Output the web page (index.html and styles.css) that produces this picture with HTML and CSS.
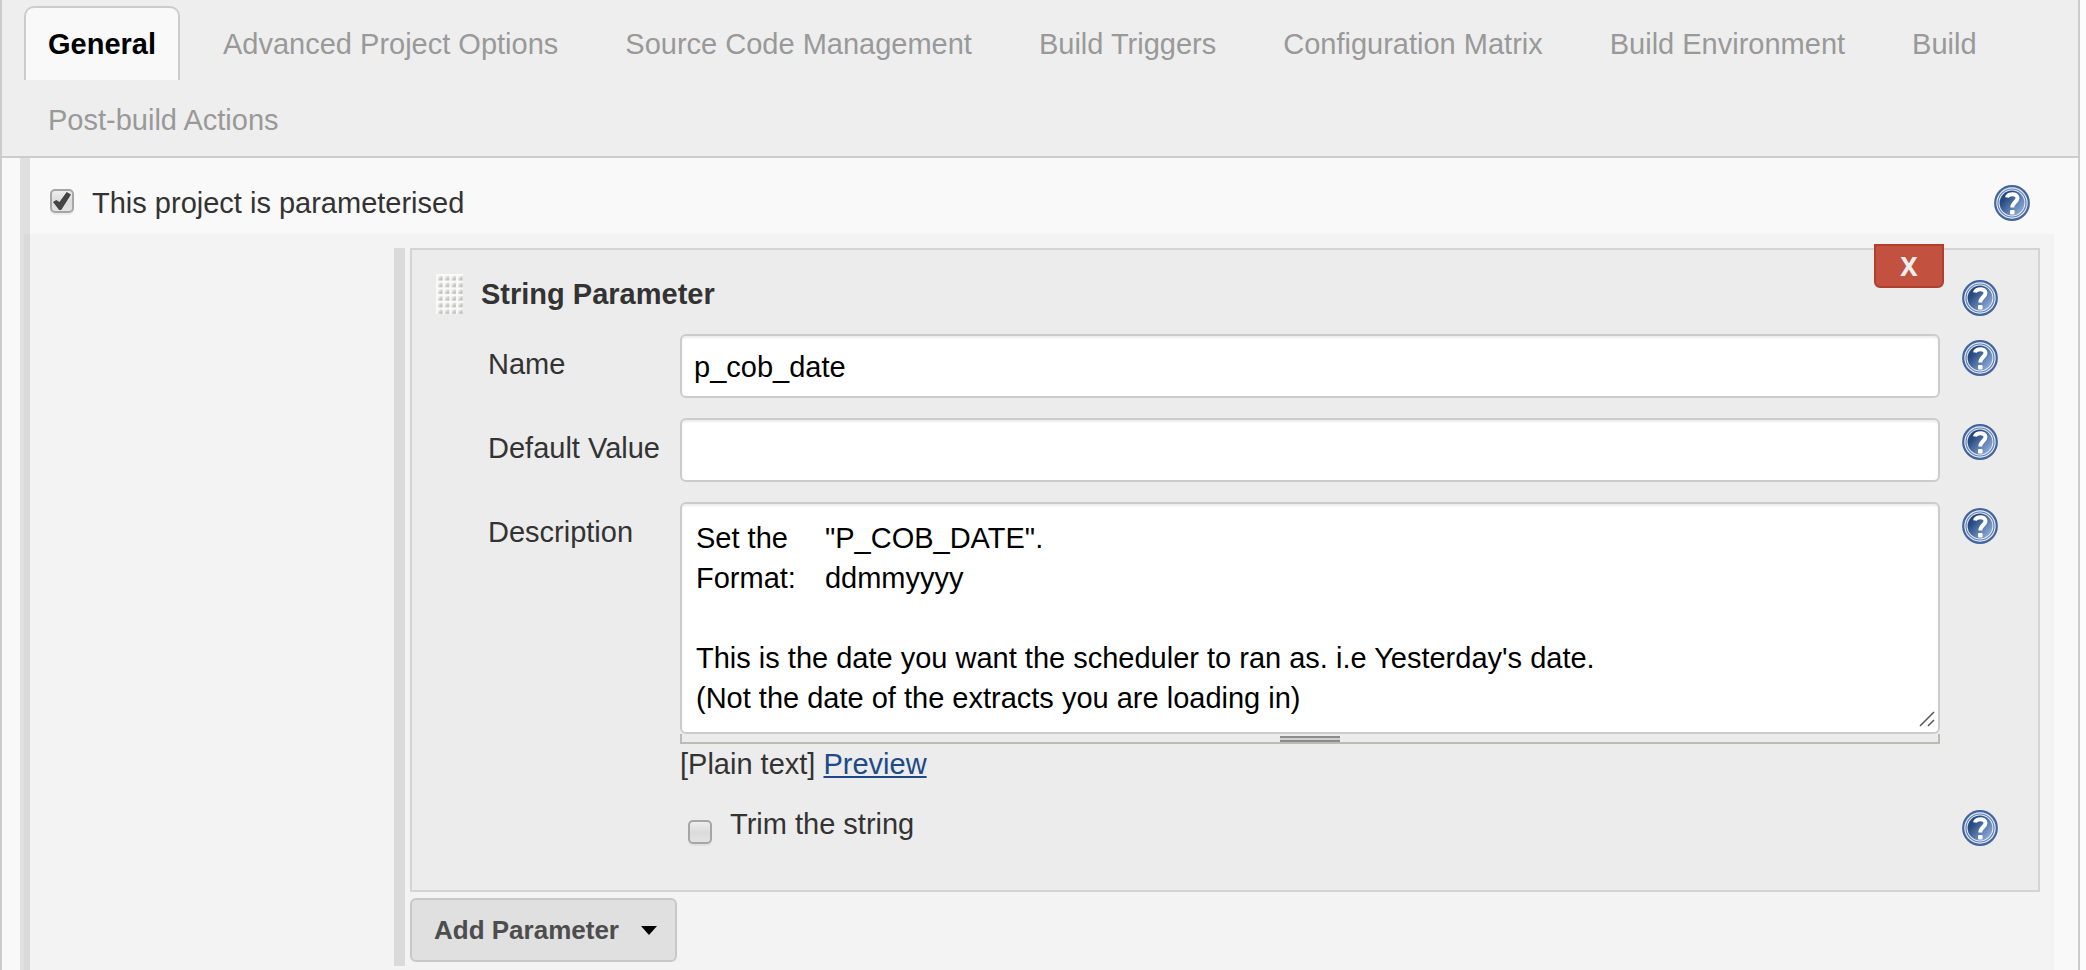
FILE: index.html
```html
<!DOCTYPE html>
<html lang="en">
<head>
<meta charset="utf-8">
<title>Project configuration</title>
<link rel="stylesheet" href="styles.css">
</head>
<body>
<svg class="defs" width="0" height="0" aria-hidden="true">
  <defs>
    <linearGradient id="disc" x1="0.1" y1="0.2" x2="0.9" y2="0.9">
      <stop offset="0.15" stop-color="#27497f"/>
      <stop offset="1" stop-color="#8fb0dc"/>
    </linearGradient>
    <linearGradient id="dot" x1="0" y1="0" x2="1" y2="1">
      <stop offset="0.2" stop-color="#f0f0ee"/>
      <stop offset="1" stop-color="#a3a29d"/>
    </linearGradient>
    <symbol id="help" viewBox="0 0 36 36">
      <circle cx="18" cy="18" r="16.8" fill="#e9eff8" stroke="#4466a0" stroke-width="2.2"/>
      <circle cx="18" cy="18" r="14" fill="#e4ebf6" stroke="#6482b4" stroke-width="1.2"/>
      <circle cx="18" cy="18" r="12.4" fill="url(#disc)"/>
      <path d="M13 12.5C13.5 8.2 23.5 7.7 23.5 13C23.5 17 18.3 17 18.3 22.5" fill="none" stroke="#fff" stroke-width="4"/>
      <rect x="16" y="25" width="4.6" height="4.6" rx="1" fill="#fff"/>
    </symbol>
    <pattern id="dots" width="6.7" height="6.7" patternUnits="userSpaceOnUse">
      <rect width="6.7" height="6.7" fill="#fafafa"/>
      <rect x="2" y="2" width="4.4" height="4.4" fill="url(#dot)"/>
    </pattern>
  </defs>
</svg>
<main class="frame">
  <nav class="tabs">
    <a class="tab tab-active" href="#general">General</a>
    <a class="tab" href="#advanced">Advanced Project Options</a>
    <a class="tab" href="#scm">Source Code Management</a>
    <a class="tab" href="#triggers">Build Triggers</a>
    <a class="tab" href="#matrix">Configuration Matrix</a>
    <a class="tab" href="#environment">Build Environment</a>
    <a class="tab" href="#build">Build</a>
    <a class="tab" href="#post-build">Post-build Actions</a>
  </nav>
  <form class="section" id="general">
    <div class="toggle-row">
      <input class="check" type="checkbox" id="parameterised" checked>
      <label class="toggle-label" for="parameterised">This project is parameterised</label>
      <button class="help" type="button" aria-label="Help"><svg class="help-icon"><use href="#help"/></svg></button>
    </div>
    <div class="nested">
      <div class="params">
        <fieldset class="param">
          <button class="delete" type="button">X</button>
          <div class="param-head">
            <svg class="grip" aria-hidden="true"><rect width="27" height="40" fill="url(#dots)"/></svg>
            <h2 class="param-title">String Parameter</h2>
            <button class="help" type="button" aria-label="Help"><svg class="help-icon"><use href="#help"/></svg></button>
          </div>
          <div class="field">
            <label class="field-label" for="name">Name</label>
            <input class="text" type="text" id="name" value="p_cob_date">
            <button class="help" type="button" aria-label="Help"><svg class="help-icon"><use href="#help"/></svg></button>
          </div>
          <div class="field">
            <label class="field-label" for="default">Default Value</label>
            <input class="text" type="text" id="default">
            <button class="help" type="button" aria-label="Help"><svg class="help-icon"><use href="#help"/></svg></button>
          </div>
          <div class="field">
            <label class="field-label" for="description">Description</label>
            <div class="editor">
              <textarea class="text area" id="description" rows="4">Set the	"P_COB_DATE".
Format:	ddmmyyyy

This is the date you want the scheduler to ran as. i.e Yesterday's date.
(Not the date of the extracts you are loading in)</textarea>
              <svg class="corner" viewBox="0 0 16 16" aria-hidden="true"><path d="M1 15L15 1M9 15L15 9" stroke="#555" stroke-width="1.5"/></svg>
              <div class="drag"><span class="drag-bar"></span></div>
              <div class="format">[Plain text] <a class="preview" href="#preview">Preview</a></div>
            </div>
            <button class="help" type="button" aria-label="Help"><svg class="help-icon"><use href="#help"/></svg></button>
          </div>
          <div class="field">
            <div class="trim">
              <input class="check" type="checkbox" id="trim">
              <label class="trim-label" for="trim">Trim the string</label>
            </div>
            <button class="help" type="button" aria-label="Help"><svg class="help-icon"><use href="#help"/></svg></button>
          </div>
        </fieldset>
        <button class="add" type="button">Add Parameter
          <svg class="caret" viewBox="0 0 16 9" aria-hidden="true"><path d="M0 0H16L8 9Z"/></svg>
        </button>
      </div>
    </div>
  </form>
</main>
</body>
</html>
```
FILE: styles.css
```css
* { box-sizing: border-box; }

body {
  margin: 0;
  padding-right: 6px;
  background: #fcfcfc;
  color: #333;
  font: 29px/40px "Liberation Sans", Arial, Helvetica, sans-serif;
}

.defs { position: absolute; }

.frame {
  display: flex;
  flex-direction: column;
  min-height: 100vh;
  border: solid #ccc;
  border-width: 0 2px;
  background: #f9f9f9;
}

.tabs {
  display: flex;
  flex-wrap: wrap;
  column-gap: 19px;
  row-gap: 2px;
  padding: 6px 22px 0;
  border-bottom: 2px solid #ccc;
  background: #eee;
}

.tab {
  height: 74px;
  padding: 16px 22px;
  border: 2px solid transparent;
  border-bottom: 0;
  color: #999;
  text-decoration: none;
}

.tab-active {
  border-color: #ccc;
  border-radius: 10px 10px 0 0;
  background: #f9f9f9;
  color: #000;
  font-weight: bold;
}

.section {
  display: flex;
  flex: 1;
  flex-direction: column;
  margin: 0 24px 0 18px;
  border-left: 10px solid #e0e0e0;
}

.toggle-row {
  display: flex;
  align-items: center;
  height: 76px;
  padding: 14px 24px 0 20px;
}

.toggle-row .check { margin-bottom: 4px; }

.toggle-label { flex: 1; margin-left: 18px; }

.check {
  appearance: none;
  display: grid;
  flex: none;
  place-items: center;
  width: 24px;
  height: 24px;
  margin: 0;
  border: 2px solid #a6a6a6;
  border-radius: 5px;
  background: linear-gradient(#eee, #dcdcdc 50%, #e2e2e2);
  box-shadow: 0 2px 1px rgba(0, 0, 0, 0.06);
}

.check:checked::before {
  content: "";
  width: 18px;
  height: 18px;
  background: #444;
  clip-path: polygon(0 56%, 18% 44%, 36% 56%, 76% 0, 100% 14%, 46% 100%, 34% 100%);
}

.help {
  flex: none;
  width: 36px;
  height: 36px;
  padding: 0;
  border: 0;
  background: none;
}

.help-icon { display: block; width: 36px; height: 36px; }

.nested {
  flex: 1;
  margin-left: -6px;
  padding: 14px 14px 4px 370px;
  background: rgba(0, 0, 0, 0.025);
}

.params {
  padding: 0 0 4px 5px;
  border-left: 11px solid #dadada;
}

.param {
  position: relative;
  margin: 0;
  padding: 22px 40px 22px 24px;
  border: 2px solid #d4d4d4;
  background: #ececec;
}

.delete {
  position: absolute;
  top: -6px;
  right: 94px;
  width: 70px;
  height: 44px;
  padding: 0;
  border: 2px solid #b03f2e;
  border-radius: 0 0 6px 6px;
  background: #c25140;
  color: #eee;
  font: bold 26px/40px "Noto Sans", "Open Sans", sans-serif;
}

.param-head {
  display: flex;
  align-items: flex-start;
  height: 62px;
}

.param-head .help { margin-top: 8px; }

.grip { flex: none; width: 27px; height: 40px; margin-top: 2px; }

.param-title {
  flex: 1;
  margin: 2px 0 0 18px;
  font-size: 29px;
  line-height: 40px;
}

.field {
  display: flex;
  align-items: flex-start;
  min-height: 64px;
  margin-bottom: 20px;
  padding-left: 52px;
}

.field:last-child { margin-bottom: 0; }

.field .help { margin: 6px 0 0 22px; }

.field-label { flex: none; width: 192px; padding-top: 10px; }

.text {
  flex: 1;
  min-width: 0;
  height: 64px;
  padding: 2px 12px 0;
  border: 2px solid #ccc;
  border-radius: 6px;
  background: #fff;
  box-shadow: inset 0 2px 2px rgba(0, 0, 0, 0.08);
  color: #000;
  font: inherit;
}

.editor { position: relative; flex: 1; min-width: 0; }

.area {
  display: block;
  width: 100%;
  height: 232px;
  padding: 14px;
  overflow: hidden;
  resize: none;
}

.corner {
  position: absolute;
  top: 209px;
  right: 5px;
  width: 16px;
  height: 16px;
}

.drag {
  display: flex;
  justify-content: center;
  height: 10px;
  padding-top: 2px;
  border: 2px solid #bbbbb3;
  border-top: 0;
}

.drag-bar {
  width: 60px;
  height: 6px;
  border: solid #8c8c8c;
  border-width: 2px 0;
  background: #d0d0d0;
}

.format { line-height: 40px; }

.preview { color: #204a87; }

.trim {
  display: flex;
  flex: 1;
  align-items: flex-start;
  padding-left: 200px;
}

.trim .check { margin-top: 16px; }

.trim-label { margin-left: 18px; }

.add {
  display: flex;
  align-items: center;
  gap: 22px;
  height: 64px;
  margin-top: 6px;
  padding: 0 18px 0 22px;
  border: 2px solid #c8c8c8;
  border-radius: 6px;
  background: #e0e0e0;
  color: #4d4d4d;
  font: bold 26px/40px "Liberation Sans", Arial, sans-serif;
}

.caret { width: 16px; height: 9px; }
```
